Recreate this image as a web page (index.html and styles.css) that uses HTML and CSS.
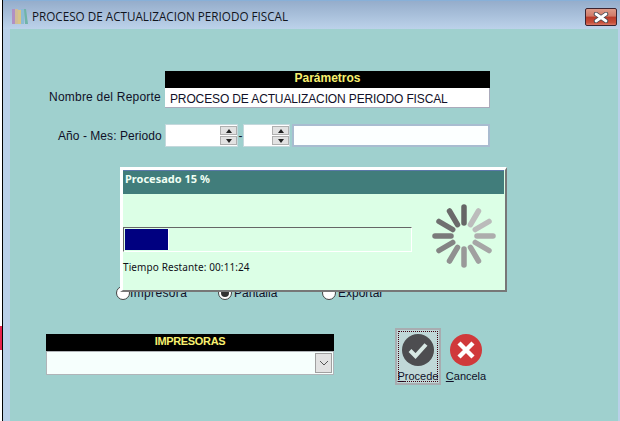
FILE: index.html
```html
<!DOCTYPE html>
<html lang="es">
<head>
<meta charset="utf-8">
<title>Proceso de actualización</title>
<link rel="stylesheet" href="styles.css">
</head>
<body>
<div class="edge"><span class="edge-mark"></span></div>
<div class="window">
  <header class="titlebar">
    <svg class="app-icon" width="16" height="16" viewBox="0 0 16 16">
      <rect x="0" y="1" width="3" height="15" fill="#b090c4"/>
      <rect x="3" y="1" width="3" height="15" fill="#d0bc98"/>
      <rect x="6" y="2" width="3" height="14" fill="#d8c488"/>
      <rect x="9" y="1" width="3" height="15" fill="#8cbcd4"/>
      <polygon points="12,1 14,1 16,16 13,16" fill="#70b4a8"/>
    </svg>
    <span class="title-text">PROCESO DE ACTUALIZACION PERIODO FISCAL</span>
    <button class="close" aria-label="Cerrar">
      <svg width="16" height="11" viewBox="0 0 16 11"><path d="M3 2 L13 9 M13 2 L3 9" stroke="#3a4450" stroke-width="4.4" stroke-linecap="round"/><path d="M3 2 L13 9 M13 2 L3 9" stroke="#fff" stroke-width="2.8" stroke-linecap="round"/></svg>
    </button>
  </header>
  <main class="client">
    <section class="report-row">
      <label class="label label-report">Nombre del Reporte</label>
      <div class="panel">
        <div class="black-head">Parámetros</div>
        <div class="report-name">PROCESO DE ACTUALIZACION PERIODO FISCAL</div>
      </div>
    </section>
    <section class="period-row">
      <label class="label label-period">Año - Mes: Periodo</label>
      <div class="spin spin-year">
        <span class="spin-btns"><i class="up"></i><i class="down"></i></span>
      </div>
      <span class="dash">-</span>
      <div class="spin spin-month">
        <span class="spin-btns"><i class="up"></i><i class="down"></i></span>
      </div>
      <div class="period-name"></div>
    </section>
    <section class="radio-row">
      <span class="radio r1"><i class="dot"></i>Impresora</span>
      <span class="radio r2"><i class="dot on"></i>Pantalla</span>
      <span class="radio r3"><i class="dot"></i>Exportar</span>
    </section>
    <section class="bottom-row">
      <div class="printers">
        <div class="black-head printers-head">IMPRESORAS</div>
        <div class="combo">
          <span class="combo-btn">
            <svg width="10" height="6" viewBox="0 0 10 6"><path d="M1 1 L5 5 L9 1" fill="none" stroke="#555" stroke-width="1"/></svg>
          </span>
        </div>
      </div>
      <div class="actions">
        <button class="action focused">
          <svg width="32" height="32" viewBox="0 0 32 32"><circle cx="16" cy="16" r="16" fill="#4d4d50"/><path d="M8 16.5 L13.5 22 L24 10.5" fill="none" stroke="#d8e8e4" stroke-width="4"/></svg>
          <span class="action-label"><u>P</u>rocede</span>
        </button>
        <button class="action">
          <svg width="32" height="32" viewBox="0 0 32 32"><circle cx="16" cy="16" r="16" fill="#d0393b"/><path d="M9 9 L23 23 M23 9 L9 23" fill="none" stroke="#fff" stroke-width="4.4"/></svg>
          <span class="action-label"><u>C</u>ancela</span>
        </button>
      </div>
    </section>
  </main>
  <aside class="progress">
    <div class="progress-title">Procesado 15 %</div>
    <div class="progress-body">
      <div class="progress-left">
        <div class="track"><div class="fill" style="width:15.6%"></div></div>
        <div class="remaining">Tiempo Restante: 00:11:24</div>
      </div>
      <svg class="spinner" width="66" height="66" viewBox="-33 -33 66 66">
        <g stroke-width="5.5" stroke-linecap="round">
          <line x1="0" y1="-13" x2="0" y2="-29" stroke="#666"/>
          <line x1="6.5" y1="-11.3" x2="14.5" y2="-25" stroke="#bcbcbc"/>
          <line x1="11.3" y1="-6.5" x2="25" y2="-14.5" stroke="#bbb"/>
          <line x1="13" y1="0" x2="29" y2="0" stroke="#adadad"/>
          <line x1="11.3" y1="6.5" x2="25" y2="14.5" stroke="#a6a6a6"/>
          <line x1="6.5" y1="11.3" x2="14.5" y2="25" stroke="#a0a0a0"/>
          <line x1="0" y1="13" x2="0" y2="29" stroke="#999"/>
          <line x1="-6.5" y1="11.3" x2="-14.5" y2="25" stroke="#909090"/>
          <line x1="-11.3" y1="6.5" x2="-25" y2="14.5" stroke="#848484"/>
          <line x1="-13" y1="0" x2="-29" y2="0" stroke="#7a7a7a"/>
          <line x1="-11.3" y1="-6.5" x2="-25" y2="-14.5" stroke="#707070"/>
          <line x1="-6.5" y1="-11.3" x2="-14.5" y2="-25" stroke="#6a6a6a"/>
        </g>
      </svg>
    </div>
  </aside>
</div>
</body>
</html>
```
FILE: styles.css
```css
* { box-sizing: border-box; }
html, body { margin: 0; padding: 0; }
body {
  width: 620px;
  height: 421px;
  overflow: hidden;
  display: flex;
  background: #fff;
  font-family: "Liberation Sans", Arial, sans-serif;
  color: #000;
}
.edge {
  width: 3px;
  flex: none;
  border-right: 1px solid #000;
  background: #fff;
  padding-top: 326px;
}
.edge-mark {
  display: block;
  width: 2px;
  height: 24px;
  background: #e8204c;
}
.window {
  position: relative;
  flex: 1;
  height: 421px;
  background: #b9d0e8;
  display: flex;
  flex-direction: column;
}
.titlebar {
  height: 29px;
  flex: none;
  display: flex;
  align-items: center;
  padding-left: 9px;
  padding-top: 2px;
  background: linear-gradient(#95adcb, #bcd2ea);
  border-top: 1px solid #88b0d8;
}
.app-icon { flex: none; margin-right: 4px; }
.title-text {
  font-family: "Open Sans", "Noto Sans", sans-serif;
  font-size: 11.7px;
  color: #10141c;
  white-space: nowrap;
}
.close {
  margin-left: auto;
  margin-right: 3px;
  align-self: flex-start;
  margin-top: 5px;
  width: 32px;
  height: 18px;
  padding: 0;
  border: 1px solid #3c2430;
  border-radius: 2px;
  display: flex;
  align-items: center;
  justify-content: center;
  background: linear-gradient(#dd9a88 0, #d07a68 45%, #b83a28 50%, #c8503c 85%, #d87868 100%);
}
.client {
  flex: 1;
  margin-left: 7px;
  margin-right: 2px;
  background: #9fd0ce;
  color: #101028;
}
.label {
  font-size: 12px;
  white-space: nowrap;
}
.report-row {
  display: flex;
  align-items: flex-end;
  margin-top: 42px;
  padding-left: 39px;
}
.label-report { width: 116px; padding-bottom: 4px; letter-spacing: 0.22px; }
.panel { width: 325px; }
.black-head {
  height: 17px;
  background: #000;
  color: #f8f070;
  font-size: 12px;
  font-weight: bold;
  text-align: center;
  line-height: 15px;
}
.report-name {
  height: 20px;
  background: #fff;
  border-right: 1px solid #aab;
  border-bottom: 1px solid #aab;
  padding-left: 5px;
  font-size: 12px;
  letter-spacing: -0.13px;
  line-height: 23px;
  white-space: nowrap;
}
.period-row {
  display: flex;
  align-items: center;
  margin-top: 16px;
  height: 23px;
  padding-left: 48px;
}
.label-period { width: 107px; letter-spacing: 0.05px; }
.spin {
  height: 23px;
  background: #fff;
  border: 1px solid #c4d8dc;
  display: flex;
  justify-content: flex-end;
  align-items: center;
}
.spin-year { width: 73px; }
.spin-month { width: 47px; }
.dash { width: 5px; font-size: 12px; text-align: center; }
.spin-btns {
  width: 17px;
  height: 19px;
  display: flex;
  flex-direction: column;
  gap: 1px;
}
.spin-btns i {
  flex: 1;
  background: #e2e2e2;
  border: 1px solid #b0b0b0;
  display: flex;
  align-items: center;
  justify-content: center;
}
.up::before, .down::before {
  content: "";
  width: 0;
  height: 0;
  border-left: 3.5px solid transparent;
  border-right: 3.5px solid transparent;
}
.up::before { border-bottom: 4px solid #222; }
.down::before { border-top: 4px solid #222; }
.period-name {
  width: 198px;
  height: 23px;
  margin-left: 2px;
  background: #fcffff;
  border: 2px solid #a8bcd0;
}
.radio-row {
  display: flex;
  height: 16px;
  margin-top: 138px;
  margin-left: 106px;
  font-size: 12px;
}
.radio {
  display: flex;
  align-items: center;
  white-space: nowrap;
}
.r1 { width: 102px; letter-spacing: 0.35px; }
.r2 { width: 104px; }
.dot {
  width: 14px;
  height: 14px;
  border-radius: 50%;
  background: #fff;
  border: 1.5px solid #444;
  margin-right: 2px;
  display: flex;
  align-items: center;
  justify-content: center;
}
.r1 .dot { margin-right: 0; }
.dot.on::before {
  content: "";
  width: 8px;
  height: 8px;
  border-radius: 50%;
  background: #333;
}
.bottom-row {
  display: flex;
  align-items: flex-start;
  margin-top: 27px;
  margin-left: 36px;
}
.printers { width: 288px; margin-top: 6px; }
.printers-head { line-height: 14px; font-size: 11px; letter-spacing: -0.35px; }
.combo {
  height: 24px;
  background: #f6fffd;
  border: 1px solid #b0b4b8;
  display: flex;
  align-items: center;
  justify-content: flex-end;
  padding-right: 1px;
}
.combo-btn {
  width: 17px;
  height: 20px;
  background: #e2e2e2;
  border: 1px solid #a0a0a0;
  display: flex;
  align-items: center;
  justify-content: center;
}
.actions {
  display: flex;
  margin-left: 61px;
  gap: 2px;
}
.action {
  width: 46px;
  height: 57px;
  padding: 4px 0 0;
  margin: 0;
  border: 2px solid transparent;
  background: transparent;
  display: flex;
  flex-direction: column;
  align-items: center;
  font-family: inherit;
  color: #101028;
}
.action svg { flex: none; }
.action-label { font-size: 11px; line-height: 13px; margin-top: 4px; white-space: nowrap; }
.focused {
  background: #c0d8d8;
  border-color: #a8acb0;
  outline: 1px dotted #400010;
  outline-offset: -4px;
}
.progress {
  position: absolute;
  left: 117px;
  top: 167px;
  width: 387px;
  height: 125px;
  background: #dcffe6;
  border-top: 3px solid #fff;
  border-left: 3px solid #fff;
  border-right: 2px solid #777;
  border-bottom: 2px solid #777;
  display: flex;
  flex-direction: column;
}
.progress-title {
  height: 24px;
  flex: none;
  padding-left: 2px;
  margin-right: 1px;
  background: #417d7b;
  border-top: 1px solid #5a78a8;
  color: #f0fff4;
  font-family: "Noto Sans", "Open Sans", sans-serif;
  font-size: 11px;
  font-weight: bold;
  line-height: 16px;
}
.progress-body {
  flex: 1;
  display: flex;
}
.progress-left {
  width: 289px;
  padding-top: 33px;
}
.track {
  height: 25px;
  border-top: 1px solid #666;
  border-left: 1px solid #666;
  border-right: 1px solid #fff;
  border-bottom: 1px solid #fff;
  padding: 1px;
}
.fill {
  height: 100%;
  background: #000080;
  border-right: 1px solid #fff;
}
.remaining {
  margin-top: 9px;
  font-family: "Noto Sans", "Open Sans", sans-serif;
  font-size: 10px;
  letter-spacing: 0.1px;
  line-height: 13px;
  color: #101018;
  white-space: nowrap;
}
.spinner {
  margin-left: 19px;
  margin-top: 9px;
  flex: none;
}
```
